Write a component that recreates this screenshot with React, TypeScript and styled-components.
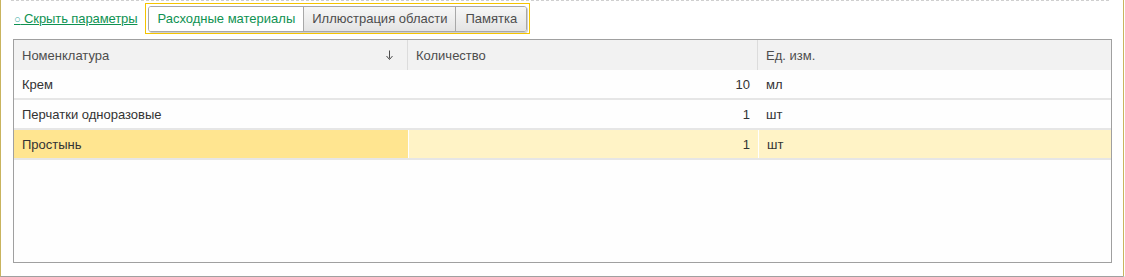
import styled, { createGlobalStyle } from "styled-components";

const GlobalStyle = createGlobalStyle`
  html, body {
    margin: 0;
    padding: 0;
    background: #ffffff;
  }
  body {
    font-family: "Liberation Sans", Arial, sans-serif;
    font-size: 13px;
    color: #4d4d4d;
  }
`;

interface Row {
  name: string;
  qty: number;
  unit: string;
  selected?: boolean;
}

const rows: Row[] = [
  { name: "Крем", qty: 10, unit: "мл" },
  { name: "Перчатки одноразовые", qty: 1, unit: "шт" },
  { name: "Простынь", qty: 1, unit: "шт", selected: true },
];

const tabs = ["Расходные материалы", "Иллюстрация области", "Памятка"];

const SortDown = () => (
  <svg width="7" height="10" viewBox="0 0 7 10">
    <path d="M3.5 0.5 V8.5" stroke="#4d4d4d" strokeWidth="1" />
    <path d="M0.5 6 L3.5 9.5 L6.5 6" fill="none" stroke="#4d4d4d" strokeWidth="1" />
  </svg>
);

const App = () => {
  return (
    <>
      <GlobalStyle />
      <Frame>
        <TopBar>
          <HideLink>
            <Bullet>○</Bullet> Скрыть параметры
          </HideLink>
          <TabFocus>
            <TabGroup>
              {tabs.map((t, i) => (
                <Tab key={t} $active={i === 0}>
                  {t}
                </Tab>
              ))}
            </TabGroup>
          </TabFocus>
        </TopBar>
        <Table>
          <HeadRow>
            <HeadCell>
              Номенклатура
              <SortDown />
            </HeadCell>
            <HeadCell>Количество</HeadCell>
            <HeadCell $last>Ед. изм.</HeadCell>
          </HeadRow>
          {rows.map((r) => (
            <BodyRow key={r.name} $selected={r.selected}>
              <Cell $current={r.selected}>{r.name}</Cell>
              <Cell $right>{r.qty}</Cell>
              <Cell>{r.unit}</Cell>
            </BodyRow>
          ))}
        </Table>
      </Frame>
    </>
  );
};

export default App;

const Frame = styled.div`
  width: 1125px;
  height: 277px;
  box-sizing: border-box;
  border-left: 1px solid #c9b45e;
  border-right: 2px solid #ffffff;
  border-bottom: 1px solid #a0a0a0;
  position: relative;
  padding: 3px 11px 0 12px;
  display: flex;
  flex-direction: column;

  &::before {
    content: "";
    position: absolute;
    top: 0;
    left: 10px;
    width: 1098px;
    border-top: 1px dashed #cfcfcf;
  }
  &::after {
    content: "";
    position: absolute;
    top: 0;
    right: -1px;
    bottom: 0;
    border-right: 1px solid #c9b45e;
  }
`;

const TopBar = styled.div`
  display: flex;
  align-items: center;
  height: 31px;
  margin-bottom: 5px;
`;

const HideLink = styled.a`
  color: #0f9252;
  text-decoration: underline;
  font-size: 13px;
  margin-left: 1px;
  margin-right: 8px;
  letter-spacing: -0.1px;
  cursor: pointer;
`;

const Bullet = styled.span`
  color: #35a8a0;
  font-size: 11px;
`;

const TabFocus = styled.div`
  border: 1px solid #f5c400;
  padding: 2px 2px 1px 2px;
  display: flex;
`;

const TabGroup = styled.div`
  display: flex;
  border: 1px solid #a8a8a8;
  border-radius: 3px;
  overflow: hidden;
  box-shadow: 1px 1px 0 #d0d0d0;
`;

const Tab = styled.div<{ $active?: boolean }>`
  height: 24px;
  line-height: 24px;
  padding: 0 8px;
  font-size: 13px;
  color: ${(p) => (p.$active ? "#0f9252" : "#4d4d4d")};
  background: ${(p) =>
    p.$active ? "#ffffff" : "linear-gradient(#f7f7f7, #e4e4e4)"};
  & + & {
    border-left: 1px solid #a8a8a8;
  }
  &:last-child {
    padding: 0 9px;
  }
`;

const Table = styled.div`
  flex: 1;
  margin-bottom: 13px;
  border: 1px solid #a0a0a0;
  background: #fefefe;
  display: flex;
  flex-direction: column;
`;

const grid = `
  display: grid;
  grid-template-columns: 394px 350px 1fr;
`;

const HeadRow = styled.div`
  ${grid};
  height: 30px;
  background: #f2f2f2;
`;

const HeadCell = styled.div<{ $last?: boolean }>`
  display: flex;
  align-items: center;
  justify-content: space-between;
  padding: 0 14px 0 8px;
  border-right: ${(p) => (p.$last ? "none" : "1px solid #dcdcdc")};
  color: #4d4d4d;
`;

const BodyRow = styled.div<{ $selected?: boolean }>`
  ${grid};
  height: 28px;
  border-bottom: 2px solid #e6e6e6;
  background: ${(p) => (p.$selected ? "#fff3c6" : "transparent")};
  & > div + div {
    border-left: ${(p) => (p.$selected ? "1px solid #ffffff" : "none")};
  }
`;

const Cell = styled.div<{ $right?: boolean; $current?: boolean }>`
  display: flex;
  align-items: center;
  justify-content: ${(p) => (p.$right ? "flex-end" : "flex-start")};
  padding: ${(p) => (p.$right ? "0 8px 0 0" : "0 0 0 8px")};
  background: ${(p) => (p.$current ? "#ffe590" : "transparent")};
  color: #333333;
`;
